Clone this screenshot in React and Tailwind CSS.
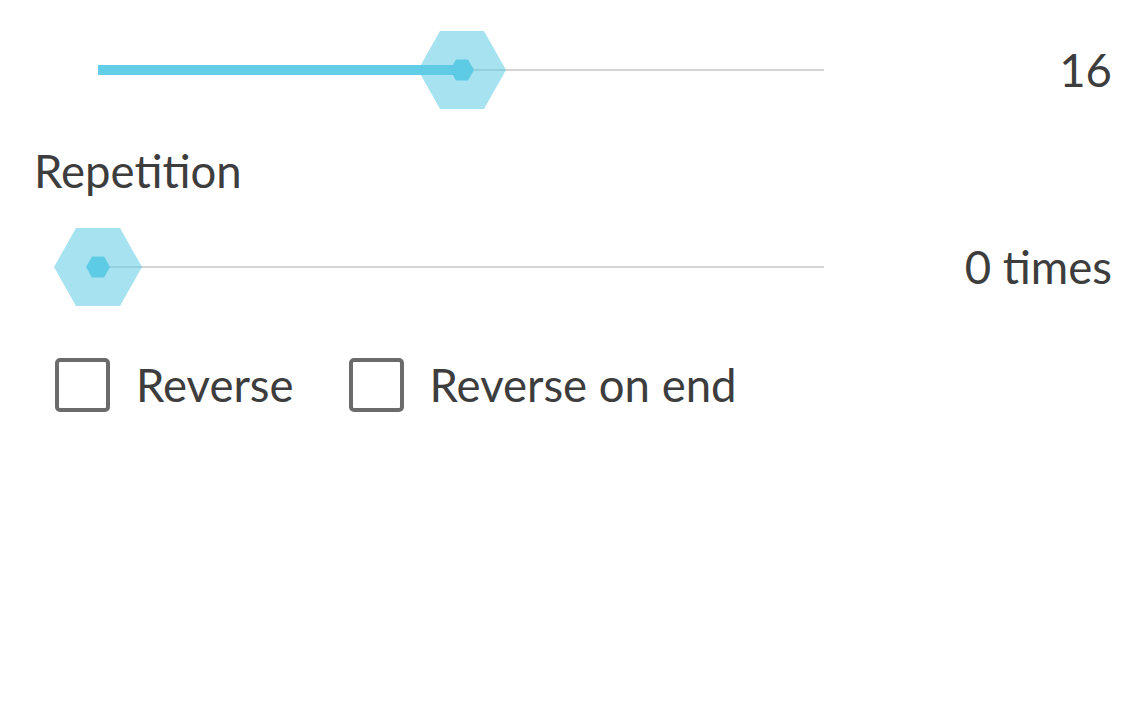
function Thumb() {
  return (
    <svg width="88" height="78" viewBox="0 0 88 78" className="absolute top-1/2 -translate-x-1/2 -translate-y-1/2">
      <polygon points="0,39 22,0 66,0 88,39 66,78 22,78" fill="#5ecbe4" fillOpacity="0.55" />
      <polygon points="32,39 38,28.5 50,28.5 56,39 50,49.5 38,49.5" fill="#5ecbe4" />
    </svg>
  )
}

function Slider({ pct, value }) {
  return (
    <div className="flex items-center h-[78px]">
      <div className="relative ml-[64px] w-[726px] h-[78px] flex items-center">
        <div className="w-full h-[2px] bg-[#d4d4d4]" />
        <div className="absolute left-0 h-[10px] bg-[#62cde6]" style={{ width: `${pct}%` }} />
        <div className="absolute top-1/2" style={{ left: `${pct}%` }}>
          <Thumb />
        </div>
      </div>
      <div className="flex-1 text-right text-[45.5px] leading-[52px] text-[#3d3d3d]">{value}</div>
    </div>
  )
}

function Check({ label }) {
  return (
    <label className="flex items-center gap-[26px]">
      <span className="w-[55px] h-[54px] border-[4px] border-[#6b6b6b] rounded-[5px]" />
      <span className="text-[45.5px] leading-[52px] text-[#3d3d3d]">{label}</span>
    </label>
  )
}

export default function App() {
  return (
    <div className="w-[1146px] h-[716px] bg-white px-[34px] pt-[31px]" style={{ fontFamily: 'Lato, "Noto Sans", sans-serif' }}>
      <Slider pct={50.1} value="16" />
      <div className="mt-[36px] text-[45.5px] leading-[52px] text-[#3d3d3d]">Repetition</div>
      <div className="mt-[31px]">
        <Slider pct={0} value="0 times" />
      </div>
      <div className="mt-[52px] flex items-center gap-[55px] pl-[21px]">
        <Check label="Reverse" />
        <Check label="Reverse on end" />
      </div>
    </div>
  )
}
